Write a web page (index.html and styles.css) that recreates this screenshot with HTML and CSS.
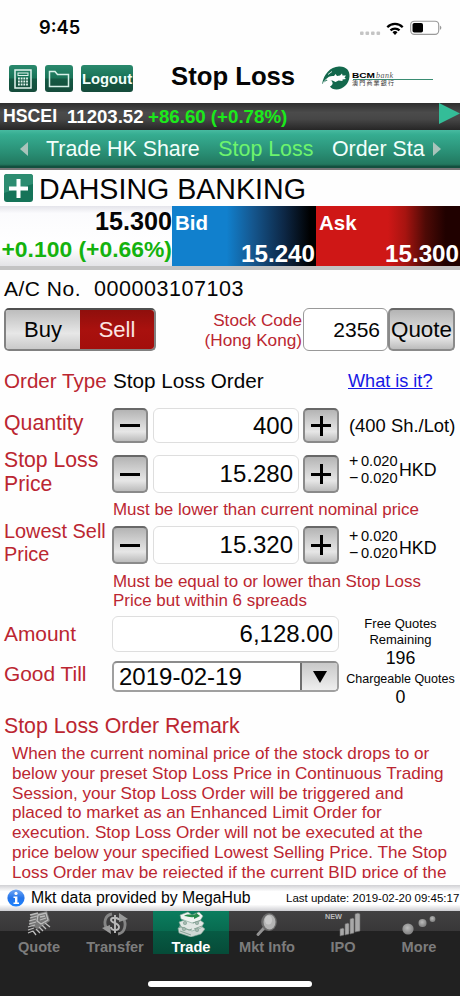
FILE: index.html
```html
<!DOCTYPE html>
<html lang="en">
<head>
  <meta charset="UTF-8" />
  <meta name="viewport" content="width=device-width, initial-scale=1" />
  <title>Stop Loss</title>
  <link rel="stylesheet" href="styles.css">
</head>
<body>

<div class="statusbar">
  <span class="clock">9:45</span>
  <svg class="status-icons" width="84" height="16" viewBox="0 0 84 16">
    <g fill="#c4c4c4">
      <rect x="2" y="11.500" width="3.600" height="3.600" rx="1"/><rect x="7.500" y="11.500" width="3.600" height="3.600" rx="1"/>
      <rect x="13" y="11.500" width="3.600" height="3.600" rx="1"/><rect x="18.500" y="11.500" width="3.600" height="3.600" rx="1"/>
    </g>
    <g fill="none" stroke="#000" stroke-width="2.300">
      <path d="M29.300 7.200a10.800 10.800 0 0 1 15.400 0"/>
      <path d="M32.500 10.400a6.400 6.400 0 0 1 9 0"/>
    </g>
    <path d="M34.500 12.300a3.600 3.600 0 0 1 5 0L37 14.900z"/>
    <rect x="52.700" y="1.200" width="28" height="13.200" rx="3.600" fill="none" stroke="#999" stroke-width="1.100"/>
    <rect x="54.500" y="3" width="10.500" height="9.600" rx="1.800"/>
    <path d="M81.900 5.600c2 .8 2 3.600 0 4.400z" fill="#999"/>
  </svg>
</div>

<header class="header">
  <button class="hbtn icon">
    <svg width="18" height="20" viewBox="0 0 18 20" fill="none" stroke="#e2f4ee">
      <rect x="1" y="1" width="16" height="18" stroke-width="1.500"/>
      <rect x="4" y="4" width="10" height="2.500"/>
      <path d="M4 9.500h10M4 12.500h10M4 15.500h10" stroke-width="1.800" stroke-dasharray="1.800 .9"/>
    </svg>
  </button>
  <button class="hbtn icon">
    <svg width="22" height="18" viewBox="0 0 22 18" fill="none" stroke="#d6f0e8" stroke-width="1.500">
      <path d="M1.500 16.500V1.500H7L9.500 4.500H20.500V16.500z"/>
    </svg>
  </button>
  <button class="hbtn logout">Logout</button>
  <h1>Stop Loss</h1>
  <svg class="logo" width="114" height="26" viewBox="0 0 114 26">
    <path d="M1 18C3 8 9 1 18 .5c7-.3 11 4 10.500 10C28 18 22 23.500 15.500 23.500c-3 0-5.500-1-6.500-3 4-2 3-5 0-6.500-4 0-5 2-8 4z" fill="#13684c"/>
    <path d="M5 13.500c2-3 5-4 8-3.500l1.500-2 1.500 2 3-.5 2-2 .5 2 3.500 0-1.500 2 1.500 1.500-3.500.5 0 1.500-4-.5-3 1.500-3-1.500-4 .5z" fill="#fff"/>
    <path d="M7 8.500l4-3M5.500 13c-1.500 1-2.500 2.500-3.500 4" fill="none" stroke="#fff" stroke-width=".8"/>
    <path d="M32 13.500H112" stroke="#398c72" stroke-width="1"/>
    <text x="31" y="11.800" class="logo-bcm" textLength="23" lengthAdjust="spacingAndGlyphs">BCM</text>
    <text x="55" y="11.800" class="logo-bank" textLength="17">bank</text>
    <text x="31" y="19" class="logo-cn" textLength="42">澳門商業銀行</text>
  </svg>
</header>

<div class="ticker">
  <span class="ticker-name">HSCEI</span>
  <span class="ticker-value">11203.52</span>
  <span class="ticker-change">+86.60 (+0.78%)</span>
  <svg class="ticker-play" width="21" height="22" viewBox="0 0 21 22"><path d="M0 0L21 10.500L0 21z" fill="#34bd98"/></svg>
</div>

<nav class="tabs">
  <svg width="8" height="14" viewBox="0 0 8 14"><path d="M8 0V14L0 7z" fill="#a9c4bb"/></svg>
  <div class="tabs-list">
    <a>Trade HK Share</a>
    <a class="active">Stop Loss</a>
    <a>Order Sta</a>
  </div>
  <svg width="8" height="14" viewBox="0 0 8 14"><path d="M0 0V14L8 7z" fill="#a9c4bb"/></svg>
</nav>

<div class="stock">
  <svg width="29" height="28" viewBox="0 0 29 28">
    <rect width="29" height="28" rx="3" fill="#157358"/>
    <path d="M0 3a3 3 0 0 1 3-3h23a3 3 0 0 1 3 3v7Q14 14 0 19z" fill="#2c8c70"/>
    <path d="M14.500 5V24M5 14.500H24" stroke="#fff" stroke-width="4"/>
  </svg>
  <span>DAHSING BANKING</span>
</div>

<div class="prices">
  <div class="last">
    <div class="last-price">15.300</div>
    <div class="last-change">+0.100 (+0.66%)</div>
  </div>
  <div class="side bid"><b>Bid</b><span>15.240</span></div>
  <div class="side ask"><b>Ask</b><span>15.300</span></div>
</div>

<main class="form">
  <div class="account"><span>A/C No.</span><span class="account-no">000003107103</span></div>

  <div class="order-side">
    <div class="segment">
      <button class="buy">Buy</button>
      <button class="sell">Sell</button>
    </div>
    <div class="stock-code">Stock Code<br>(Hong Kong)</div>
    <div class="field code">2356</div>
    <button class="btn quote">Quote</button>
  </div>

  <div class="order-type">
    <span class="label">Order Type</span>
    <span class="type-name">Stop Loss Order</span>
    <a class="help">What is it?</a>
  </div>

  <div class="row qty">
    <span class="label">Quantity</span>
    <button class="btn step minus"></button>
    <div class="field">400</div>
    <button class="btn step plus"></button>
    <span class="lot">(400 Sh./Lot)</span>
  </div>

  <div class="row price">
    <span class="label">Stop Loss<br>Price</span>
    <button class="btn step minus"></button>
    <div class="field">15.280</div>
    <button class="btn step plus"></button>
    <div class="spread">
      <div><i>+</i>0.020</div>
      <div><i>−</i>0.020</div>
    </div>
    <span class="ccy">HKD</span>
  </div>
  <p class="note">Must be lower than current nominal price</p>

  <div class="row price lowest">
    <span class="label">Lowest Sell<br>Price</span>
    <button class="btn step minus"></button>
    <div class="field">15.320</div>
    <button class="btn step plus"></button>
    <div class="spread">
      <div><i>+</i>0.020</div>
      <div><i>−</i>0.020</div>
    </div>
    <span class="ccy">HKD</span>
  </div>
  <p class="note two">Must be equal to or lower than Stop Loss<br>Price but within 6 spreads</p>

  <div class="totals">
    <div class="totals-fields">
      <div class="row amount">
        <span class="label">Amount</span>
        <div class="field">6,128.00</div>
      </div>
      <div class="row till">
        <span class="label">Good Till</span>
        <div class="select">
          <span>2019-02-19</span>
          <div class="select-arrow"><svg width="14" height="12" viewBox="0 0 14 12"><path d="M0 0H14L7 12z"/></svg></div>
        </div>
      </div>
    </div>
    <div class="quotes">
      <div class="quotes-free">Free Quotes<br>Remaining</div>
      <div class="quotes-num">196</div>
      <div class="quotes-paid">Chargeable Quotes</div>
      <div class="quotes-num last-num">0</div>
    </div>
  </div>

  <h2 class="remark-title">Stop Loss Order Remark</h2>
  <div class="remark">When the current nominal price of the stock drops to or<br>below your preset Stop Loss Price in Continuous Trading<br>Session, your Stop Loss Order will be triggered and<br>placed to market as an Enhanced Limit Order for<br>execution. Stop Loss Order will not be executed at the<br>price below your specified Lowest Selling Price. The Stop<br>Loss Order may be rejected if the current BID price of the</div>
</main>

<div class="infobar">
  <svg width="18" height="18" viewBox="0 0 18 18">
    <defs><linearGradient id="info" x2="0" y2="1"><stop stop-color="#72a8f5"/><stop offset=".5" stop-color="#2474ea"/><stop offset="1" stop-color="#1c83ff"/></linearGradient></defs>
    <circle cx="9" cy="9" r="8.600" fill="url(#info)"/>
    <circle cx="9" cy="4.400" r="1.600" fill="#fff"/>
    <path d="M6.500 7.500H10.400V13.500H12V15H6.500V13.500H8V9H6.500z" fill="#fff"/>
  </svg>
  <span class="provider">Mkt data provided by MegaHub</span>
  <span class="updated">Last update: 2019-02-20 09:45:17</span>
</div>

<footer class="tabbar">
  <div class="tab">
    <svg width="26" height="26" viewBox="0 0 26 26">
      <path d="M5 4L21 0L24 10L12 18L3 14z" fill="#777"/>
      <g fill="none" stroke="#bdbdbd" stroke-width="1.300">
        <path d="M4 4l8-2M4 7l7-2M3 10l7-2M3 13l7-2M2 16l7-2M2 19l6-2M2 22l5-2M10 24l-3-4M14 22l-4-4M17 20l-4-4M20 18l-4-4M24 16l-5-4"/>
        <path d="M12 4l8-2 2 7-7 4-4-3zM14 6l5-1M14 9l6-2"/>
      </g>
    </svg>
    <span>Quote</span>
  </div>
  <div class="tab">
    <svg width="28" height="26" viewBox="0 0 28 26" fill="none">
      <g stroke="#858585" stroke-width="2.800">
        <path d="M11 3C4 4 2 12 6 18"/><path d="M17 23c7-1 9-10 5-16"/>
      </g>
      <path d="M1 17L10 23L9 14zM27 8L18 2L18 11z" fill="#999"/>
      <path d="M18 9c-1-3-8-3-8 0s8 3 8 7-8 4-8 0M14 4v18" stroke="#bababa" stroke-width="1.900"/>
    </svg>
    <span>Transfer</span>
  </div>
  <div class="tab active">
    <svg width="28" height="26" viewBox="0 0 28 26" stroke="#7c9f91" stroke-width=".6">
      <path d="M1 17l8-3 7 4 7-4 5 4-4 5-10 3-12-4z" fill="#cfd8d4"/>
      <path d="M2 11l8-3 6 4 7-3 4 3-3 5-9 3-11-4z" fill="#e2e8e5"/>
      <path d="M3 4l8-3 4 3 7-3 4 4-3 5-8 2-11-4z" fill="#f0f4f2"/>
      <path d="M2 15l10 4 3-1M3 20l11 4M17 18l8-3M16 12l8-3" fill="none" stroke="#8aa398" stroke-width="1"/>
      <path d="M7 5c4-3 8 0 12-2l-1-2 5 4-6 3V6c-4 1-6-1-10-1z" fill="#278b4b" stroke="none"/>
      <circle cx="8" cy="12" r="1.700" fill="#a5b6ae"/><circle cx="20" cy="12" r="1.700" fill="#a5b6ae"/>
      <circle cx="7" cy="18" r="1.700" fill="#a5b6ae"/><circle cx="20" cy="19" r="1.700" fill="#a5b6ae"/>
    </svg>
    <span>Trade</span>
  </div>
  <div class="tab">
    <svg width="24" height="26" viewBox="0 0 24 26">
      <path d="M9 17L3 23.500" stroke="#929292" stroke-width="3" stroke-linecap="round"/>
      <ellipse cx="14" cy="11" rx="7.800" ry="9" fill="#6c6c6c"/>
      <ellipse cx="14.500" cy="11" rx="6" ry="7.400" fill="#b4b4b4"/>
      <ellipse cx="13.500" cy="9" rx="3.600" ry="4.600" fill="#cacaca"/>
    </svg>
    <span>Mkt Info</span>
  </div>
  <div class="tab">
    <svg width="36" height="26" viewBox="0 0 36 26">
      <text x="0" y="8" class="new" textLength="17" lengthAdjust="spacingAndGlyphs">NEW</text>
      <g fill="#a8a8a8" stroke="#666" stroke-width=".6">
        <path d="M15 18l3-1 1 1v6l-4 1zM20 13l3-1 1 1v10l-4 1zM25 8l3-1 1 1v14l-4 1zM30 3l3-1 2 1v17l-5 1z"/>
      </g>
    </svg>
    <span>IPO</span>
  </div>
  <div class="tab">
    <svg width="34" height="26" viewBox="0 0 34 26">
      <defs><radialGradient id="ball" cx=".45" cy=".4"><stop stop-color="#bcbcbc"/><stop offset="1" stop-color="#888"/></radialGradient></defs>
      <g fill="url(#ball)"><circle cx="6" cy="18" r="5.600"/><circle cx="20.500" cy="12" r="4"/><circle cx="30.500" cy="8" r="2.900"/></g>
    </svg>
    <span>More</span>
  </div>
</footer>
<div class="home"><div class="home-line"></div></div>

</body>
</html>
```
FILE: styles.css
```css
* {
  box-sizing: border-box;
}
body {
  margin: 0;
  width: 460px;
  height: 996px;
  overflow: hidden;
  background: #fefefe;
  color: #050505;
  font-family: "Liberation Sans", Arial, sans-serif;
  white-space: nowrap;
}
h1, h2, p {
  margin: 0;
}
button {
  padding: 0;
  border: none;
  color: inherit;
  font-family: inherit;
}
svg {
  display: block;
  flex: none;
}

/* status bar + header */
.statusbar {
  display: flex;
  justify-content: space-between;
  height: 54px;
  padding: 16px 18px 0 39px;
}
.clock {
  font: 600 18.3px/22px Inter, sans-serif;
}
.status-icons {
  margin: 4px 0 0;
}
.header {
  display: flex;
  height: 49px;
  padding: 11px 0 0 9px;
}
.hbtn {
  display: flex;
  align-items: center;
  justify-content: center;
  height: 27px;
  border-radius: 3px;
  background: linear-gradient(#2a896d, #197357 48%, #145943 52%, #154b3b);
  color: #f2fffb;
}
.icon {
  width: 28px;
  margin-right: 8px;
}
.logout {
  width: 52px;
  font-weight: bold;
  font-size: 14.8px;
}
h1 {
  width: 124px;
  margin-left: 38px;
  font-size: 25.7px;
  line-height: 22px;
}
.logo {
  margin: 1px 0 0 26px;
}
.logo-bcm {
  font: bold 7.5px "Liberation Sans", sans-serif;
}
.logo-bank {
  font: italic 8px "Liberation Serif", serif;
  fill: #555;
}
.logo-cn {
  font: 6px "Noto Sans CJK TC", sans-serif;
  fill: #333;
}

/* index ticker */
.ticker {
  display: flex;
  height: 27px;
  padding-left: 3px;
  background: linear-gradient(#2e2e2e, #4b4b4b 35%, #464646 60%, #262626);
  color: #fff;
  font-weight: bold;
  font-size: 18.6px;
  line-height: 27px;
}
.ticker-name {
  width: 64px;
  font-size: 17.7px;
}
.ticker-value {
  width: 81px;
}
.ticker-change {
  color: #1bea1b;
  font-size: 18.7px;
}
.ticker-play {
  margin-left: auto;
}

/* page tabs */
.tabs {
  display: flex;
  align-items: center;
  gap: 18px;
  height: 40px;
  padding: 0 0 0 20px;
  border-bottom: 2px solid #777;
  background: linear-gradient(#47baa0, #36ad91 12%, #298e74 60%, #22785f 90%, #124f3e 96%);
}
.tabs-list {
  display: flex;
  gap: 18.500px;
  width: 379px;
  color: #f2fffb;
  font-size: 21.4px;
  line-height: 38px;
}
.tabs-list + svg {
  margin-left: -10px;
}
.tabs-list .active {
  color: #6df46d;
}

/* quote */
.stock {
  display: flex;
  height: 36px;
  padding: 4px 0 0 4px;
  font-size: 28.6px;
  line-height: 30px;
}
.stock span {
  margin-left: 6px;
}
.prices {
  display: flex;
  height: 64px;
  border-bottom: 4px solid #c3c3c3;
  font-weight: bold;
}
.last {
  width: 172px;
  background: linear-gradient(#e4e4ea, #fbfbfd 12%, #fff 70%, #e3e3e6);
  text-align: right;
}
.last-price {
  font-size: 25.2px;
  line-height: 30px;
}
.last-change {
  color: #14b20e;
  font-size: 22.9px;
  line-height: 26px;
}
.side {
  display: flex;
  flex-direction: column;
  width: 144px;
  padding: 3px 1px 0 3px;
  color: #fff;
}
.side b {
  font-size: 20.5px;
  line-height: 27px;
}
.side span {
  align-self: flex-end;
  font-size: 24.2px;
  line-height: 35px;
}
.bid {
  background: linear-gradient(90deg, #1180cd 38%, #15578f 56%, #0d2745 78%, #000 96%);
}
.ask {
  background: linear-gradient(90deg, #cf1716 50%, #a71410 62%, #4e0a06 76%, #200100 90%);
}

/* order form */
.form {
  height: 608px;
  padding-left: 4px;
  overflow: hidden;
}
.account {
  display: flex;
  height: 38px;
  font-size: 21px;
  line-height: 38px;
}
.account span:first-child {
  width: 90px;
  letter-spacing: 0.5px;
}
.account-no {
  font-size: 21.5px;
  letter-spacing: 0.55px;
}
.label,
.stock-code,
.note,
.remark-title,
.remark {
  color: #bb2631;
}
.order-side {
  display: flex;
  height: 43px;
}
.segment {
  display: flex;
  width: 152px;
  height: 43px;
  border: 2px solid #818181;
  border-top-color: #4f4f4f;
  border-radius: 5px;
  overflow: hidden;
}
.segment button {
  flex: 1;
  font-size: 22px;
}
.buy {
  background: linear-gradient(#bdbdbd, #e7e7e7 60%, #c9c9c9);
}
.sell {
  background: linear-gradient(#8f0f0c, #a9110e 50%, #a30e0c);
  color: #fbe4e1;
}
.stock-code {
  width: 147px;
  padding: 2px 1px 0 0;
  font-size: 17.2px;
  line-height: 20px;
  text-align: right;
}
.field {
  display: flex;
  align-items: center;
  justify-content: flex-end;
  height: 100%;
  padding-right: 5px;
  border: 1px solid #dedede;
  border-radius: 6px;
  background: #fff;
  font-size: 24px;
}
.code {
  width: 85px;
  padding-right: 7px;
  border-color: #999;
  font-size: 21px;
}
.btn {
  border: 2px solid #8a8a8a;
  border-top-color: #686868;
  border-radius: 5px;
  background: linear-gradient(#b4b4b4, #d2d2d2 40%, #e6e6e6 70%, #bcbcbc);
}
.quote {
  width: 67px;
  font-size: 22.4px;
}
.order-type {
  display: flex;
  height: 57px;
  padding-top: 3px;
  font-size: 20.5px;
  line-height: 54px;
}
.type-name {
  width: 235px;
  margin-left: 1px;
  font-size: 20.7px;
}
.help {
  color: #1717e5;
  font-size: 18.1px;
  text-decoration: underline;
}
.label {
  flex: none;
  width: 108px;
  font-size: 20.9px;
}
.order-type .label {
  font-size: 20.6px;
}
.row {
  display: flex;
  align-items: center;
  height: 38px;
}
.row .field {
  width: 146px;
  margin: 0 4px 0 5px;
}
.qty {
  height: 35px;
}
.qty .label {
  padding-bottom: 4px;
  font-size: 21.3px;
}
.price {
  margin-top: 12px;
}
.price .label {
  padding-bottom: 4px;
  font-size: 21.2px;
  line-height: 24px;
}
.price.lowest {
  margin-top: 7px;
}
.lowest .label {
  font-size: 19.9px;
  line-height: 23px;
}
.step {
  width: 36px;
  height: 100%;
}
.minus {
  background: linear-gradient(#000, #000) center / 20px 3px no-repeat,
    linear-gradient(#b4b4b4, #d2d2d2 40%, #e6e6e6 70%, #bcbcbc);
}
.plus {
  background: linear-gradient(#000, #000) center / 20px 3px no-repeat,
    linear-gradient(#000, #000) center / 3px 20px no-repeat,
    linear-gradient(#b4b4b4, #d2d2d2 40%, #e6e6e6 70%, #bcbcbc);
}
.lot {
  margin-left: 10px;
  font-size: 18.4px;
}
.spread {
  width: 60px;
  padding: 0 0 8px 10px;
  font-size: 14.6px;
}
.spread div {
  display: flex;
  height: 17px;
  line-height: 17px;
}
.spread i {
  width: 12px;
  font: 300 16px/16px "Liberation Sans", sans-serif;
}
.ccy {
  margin-top: -8px;
  font-size: 17.8px;
}
.lowest .spread {
  padding-bottom: 0;
}
.lowest .ccy {
  margin-top: 6px;
}
.note {
  margin: 7px 0 0 109px;
  font-size: 16.95px;
  line-height: 19px;
}
.two {
  margin-top: 8px;
}
.totals {
  display: flex;
  height: 98px;
  margin-top: 6px;
}
.row.amount {
  height: 36px;
}
.amount .field {
  width: 227px;
  margin: 0;
}
.till {
  height: 31px;
  margin-top: 9px;
}
.till .label {
  padding-bottom: 5px;
}
.select {
  display: flex;
  width: 227px;
  height: 31px;
  border: 2px solid #a0a0a0;
  border-top-color: #8c8c8c;
  border-radius: 5px;
  background: #fff;
  font-size: 24px;
  line-height: 27px;
  overflow: hidden;
}
.select span {
  flex: 1;
  padding-left: 5px;
}
.select-arrow {
  display: flex;
  align-items: center;
  justify-content: center;
  width: 37px;
  border-left: 2px solid #6e6e6e;
  background: linear-gradient(#c9c9c9, #eee);
}
.quotes {
  width: 124px;
  padding-left: 2px;
  font-size: 13px;
  text-align: center;
}
.quotes-free {
  line-height: 15.5px;
}
.quotes-num {
  font-size: 17.8px;
  line-height: 22px;
}
.quotes-paid {
  font-size: 12.5px;
  line-height: 20px;
}
.last-num {
  line-height: 17px;
}
.remark-title {
  font-weight: normal;
  font-size: 21.3px;
  line-height: 24px;
}
.remark {
  height: 134px;
  margin-top: 6px;
  padding-left: 8px;
  overflow: hidden;
  font-size: 17.15px;
  line-height: 19.75px;
}

/* data provider */
.infobar {
  display: flex;
  align-items: center;
  height: 26px;
  margin-top: 7px;
  padding-left: 7px;
  background: linear-gradient(#d0d0d4, #fff 25%, #fff 75%, #cfcfd3);
}
.provider {
  width: 255px;
  margin-left: 6px;
  font-size: 15.8px;
}
.updated {
  font-size: 11.5px;
}

/* bottom bar */
.tabbar {
  display: flex;
  height: 43px;
  padding-left: 1px;
  background: linear-gradient(#424142, #383738 20px, #212121 20px);
}
.tab {
  display: flex;
  flex: none;
  flex-direction: column;
  align-items: center;
  width: 76px;
  color: #7c7c7c;
  font-weight: bold;
  font-size: 14.6px;
}
.tab span {
  line-height: 21px;
}
.tab.active {
  background: linear-gradient(#0b7d5e, #086b50 20px, #075b44 20px, #064b38);
  color: #fff;
}
.new {
  fill: #bcbcbc;
  font: bold 7.5px "Liberation Sans", sans-serif;
}
.home {
  height: 42px;
  padding-top: 27px;
  background: #212121;
}
.home-line {
  width: 164px;
  height: 6px;
  margin: 0 auto;
  border-radius: 3px;
  background: #fff;
}
```
